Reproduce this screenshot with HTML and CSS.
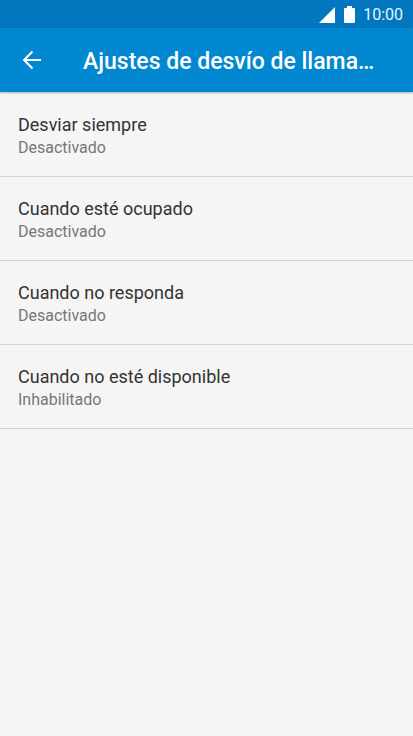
FILE: index.html
```html
<!DOCTYPE html>
<html lang="es">
<head>
  <meta charset="UTF-8">
  <meta name="viewport" content="width=device-width, initial-scale=1">
  <title>Ajustes de desvío de llamadas</title>
  <link rel="stylesheet" href="styles.css">
</head>
<body>
  <div class="status-bar">
    <svg class="signal" viewBox="0 0 16 16" aria-hidden="true"><path d="M16 0v16H0z"/></svg>
    <svg class="battery" viewBox="0 0 11 17" aria-hidden="true"><path d="M3 0h5v2h2q1 0 1 1v13q0 1-1 1H1q-1 0-1-1V3q0-1 1-1h2z"/></svg>
    <span class="clock">10:00</span>
  </div>

  <header class="app-bar">
    <button class="back" type="button" aria-label="Atrás">
      <svg viewBox="0 0 20 20" aria-hidden="true"><path d="M19 10H2M10.500 1.500L2 10l8.500 8.500"/></svg>
    </button>
    <h1>Ajustes de desvío de llamadas</h1>
  </header>

  <main>
    <ul class="settings">
      <li>
        <button type="button">
          <span class="name">Desviar siempre</span>
          <span class="state">Desactivado</span>
        </button>
      </li>
      <li>
        <button type="button">
          <span class="name">Cuando esté ocupado</span>
          <span class="state">Desactivado</span>
        </button>
      </li>
      <li>
        <button type="button">
          <span class="name">Cuando no responda</span>
          <span class="state">Desactivado</span>
        </button>
      </li>
      <li>
        <button type="button">
          <span class="name">Cuando no esté disponible</span>
          <span class="state">Inhabilitado</span>
        </button>
      </li>
    </ul>
  </main>
</body>
</html>
```
FILE: styles.css
```css
* {
  box-sizing: border-box;
}
body {
  margin: 0;
  min-height: 100vh;
  font-family: Roboto, sans-serif;
  background: #f5f5f5;
  color: #333;
}
button {
  border: none;
  background: none;
  font-family: inherit;
  color: inherit;
  cursor: pointer;
}

/* barra de estado */
.status-bar {
  display: flex;
  align-items: center;
  justify-content: flex-end;
  height: 28px;
  padding: 1px 10px 0;
  background: #0277bd;
  color: #e1f5fe;
}
.status-bar svg {
  fill: #fff;
}
.signal {
  width: 16px;
  height: 16px;
  margin-right: 9px;
}
.battery {
  width: 11px;
  height: 17px;
  margin-right: 8px;
}
.clock {
  font-size: 16px;
  line-height: 28px;
}

/* cabecera */
.app-bar {
  display: flex;
  align-items: center;
  height: 64px;
  padding: 0 32px 0 12px;
  background: #0288d1;
  color: #fff;
  box-shadow: 0 1px 2px rgba(0,0,0,0.3);
}
.back {
  display: flex;
  flex: none;
  width: 40px;
  padding: 10px;
  margin-right: 31px;
}
.back svg {
  width: 20px;
  height: 20px;
  fill: none;
  stroke: #fff;
  stroke-width: 2;
}
h1 {
  flex: 1;
  min-width: 0;
  margin: 0;
  padding-top: 4px;
  font-size: 23px;
  font-weight: 500;
  line-height: 32px;
  white-space: nowrap;
  overflow: hidden;
  text-overflow: ellipsis;
}

/* lista de ajustes */
.settings {
  list-style: none;
  margin: 0;
  padding: 1px 0 0;
}
.settings li {
  border-bottom: 1px solid #d4d4d4;
}
.settings button {
  display: block;
  width: 100%;
  padding: 20px 18px 17px;
  text-align: left;
}
.name, .state {
  display: block;
}
.name {
  font-size: 18px;
  line-height: 24px;
}
.state {
  font-size: 16px;
  line-height: 22px;
  color: #777;
}
```
